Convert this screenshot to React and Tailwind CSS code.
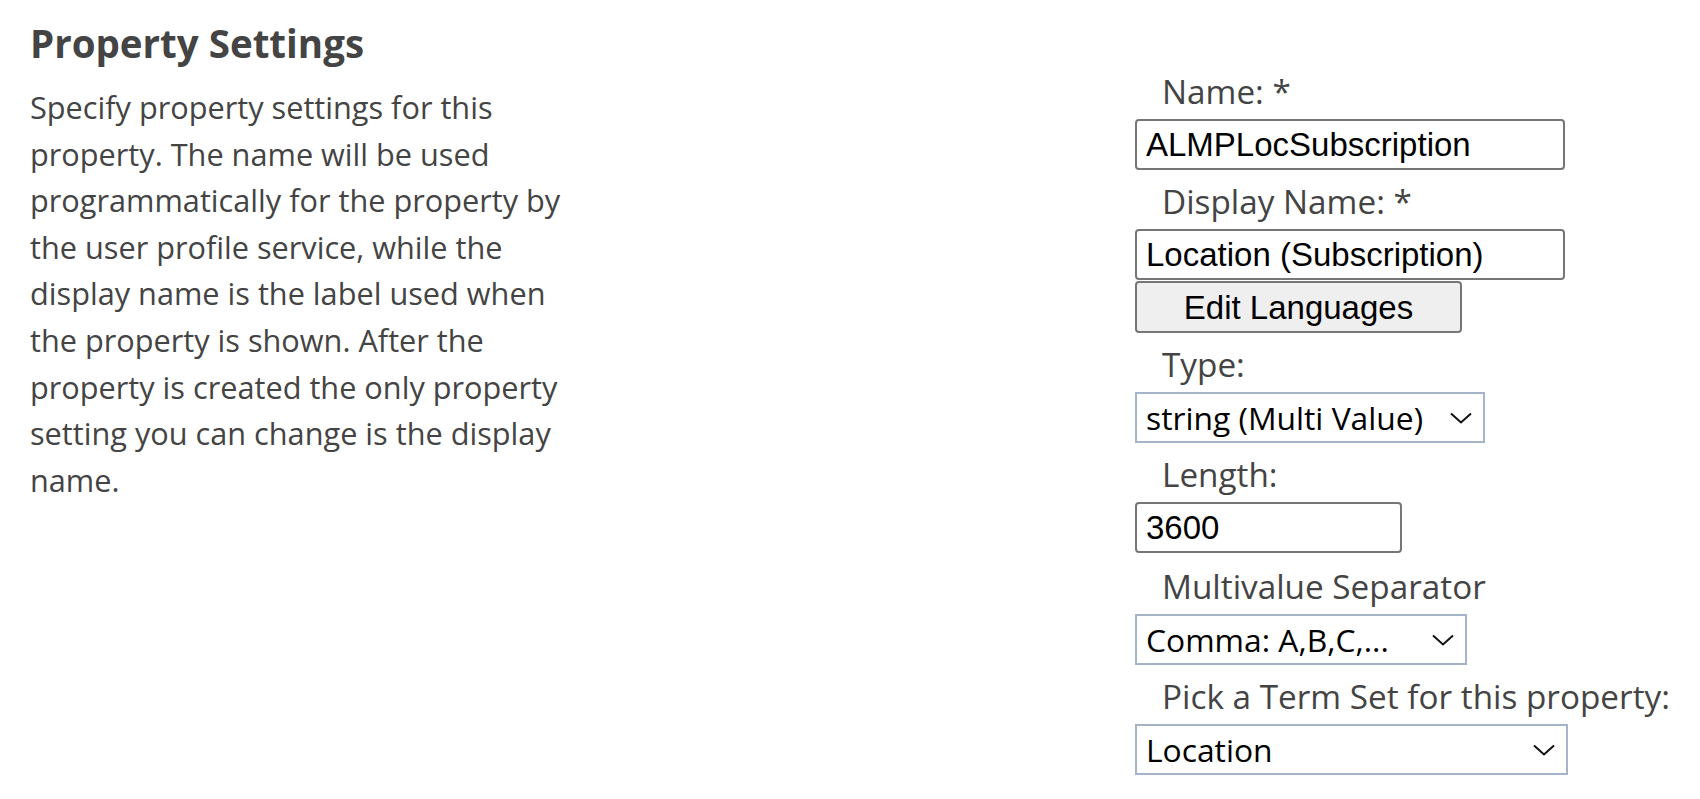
import React from "react";

const segoe = { fontFamily: '"Segoe UI", "Open Sans", "Noto Sans", sans-serif' };

const lines = [
    "Specify property settings for this",
    "property. The name will be used",
    "programmatically for the property by",
    "the user profile service, while the",
    "display name is the label used when",
    "the property is shown. After the",
    "property is created the only property",
    "setting you can change is the display",
    "name.",
];

const Label = ({ children, loose }) => (
    <div
        className={`pl-[27px] ${loose ? "pt-[5px]" : "pt-[3px]"} leading-[56px] text-[33.3px] text-[#444444] whitespace-nowrap font-['Segoe_UI','Open_Sans',sans-serif]`}
    >
        {children}
    </div>
);

const TextBox = ({ value, width }) => (
    <input
        type="text"
        defaultValue={value}
        className={`${width} h-[51px] border-2 border-[#767676] rounded-[4px] bg-white px-[9px] text-[33px] text-black font-['Liberation_Sans',Arial,sans-serif] outline-none`}
    />
);

const Chevron = () => (
    <svg width="22" height="12" viewBox="0 0 22 12" fill="none" className="shrink-0">
        <path d="M1 1.5 L11 10.5 L21 1.5" stroke="#111" strokeWidth="2" />
    </svg>
);

const Dropdown = ({ value, width }) => (
    <div className={`${width} h-[51px] border-2 border-[#a5b4c8] bg-white flex items-center justify-between pl-[9px] pr-[11px]`}>
        <span className="text-[31.8px] text-black font-['Segoe_UI','Open_Sans',sans-serif] whitespace-nowrap">{value}</span>
        <Chevron />
    </div>
);

export default function App() {
    return (
        <div className="min-h-screen bg-white flex" style={segoe}>
            <div className="w-[1135px] shrink-0 pl-[30px] pt-[16px]">
                <h2 className="text-[38.5px] leading-[54px] font-bold text-[#444444] font-['Segoe_UI','Open_Sans',sans-serif]">
                    Property Settings
                </h2>
                <p className="mt-[14px] text-[30.7px] leading-[46.6px] text-[#444444] font-['Segoe_UI','Open_Sans',sans-serif] whitespace-nowrap">
                    {lines.map((l, i) => (
                        <React.Fragment key={i}>
                            {l}
                            {i < lines.length - 1 && <br />}
                        </React.Fragment>
                    ))}
                </p>
            </div>
            <div className="flex flex-col items-start pt-[60px]">
                <Label>Name: *</Label>
                <TextBox value="ALMPLocSubscription" width="w-[430px]" />
                <Label>Display Name: *</Label>
                <TextBox value="Location (Subscription)" width="w-[430px]" />
                <button
                    type="button"
                    className="mt-[1px] w-[327px] h-[52px] border-2 border-[#767676] rounded-[4px] bg-[#efefef] text-[33px] text-black font-['Liberation_Sans',Arial,sans-serif]"
                >
                    Edit Languages
                </button>
                <Label>Type:</Label>
                <Dropdown value="string (Multi Value)" width="w-[350px]" />
                <Label>Length:</Label>
                <TextBox value="3600" width="w-[267px]" />
                <Label loose>Multivalue Separator</Label>
                <Dropdown value="Comma: A,B,C,..." width="w-[332px]" />
                <Label>Pick a Term Set for this property:</Label>
                <Dropdown value="Location" width="w-[433px]" />
            </div>
        </div>
    );
}
